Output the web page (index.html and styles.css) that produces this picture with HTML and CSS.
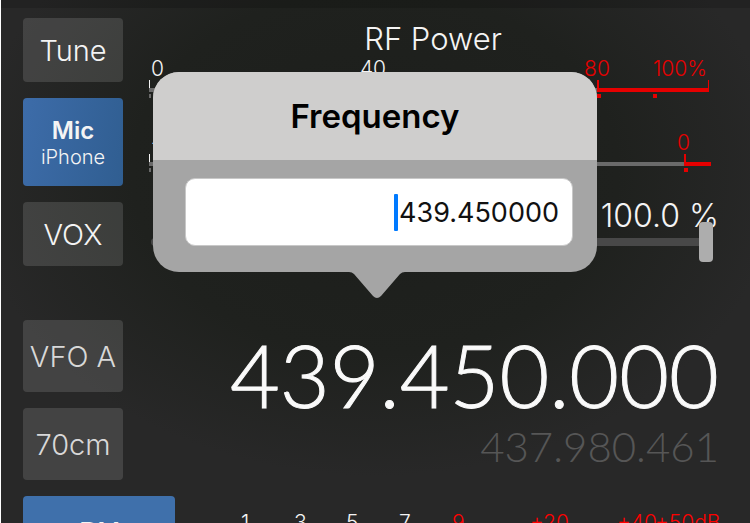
FILE: index.html
```html
<!DOCTYPE html>
<html lang="en">
<head>
<meta charset="utf-8">
<title>Transceiver</title>
<link rel="stylesheet" href="styles.css">
</head>
<body>
<header class="topbar"></header>
<main class="radio">
  <section class="panel transmit">
    <div class="keys">
      <button class="key" type="button">Tune</button>
      <button class="key key-mic active" type="button"><strong>Mic</strong><small>iPhone</small></button>
      <button class="key" type="button">VOX</button>
    </div>
    <div class="meters">
      <h2 class="meter-title">RF Power</h2>
      <div class="meter power">
        <div class="labels"><span class="l0">0</span><span class="l40">40</span><span class="l80">80</span><span class="l100">100%</span></div>
        <div class="ticks"><i></i><i class="hot"></i></div>
        <div class="dots"><i></i><i class="hot"></i><i class="hot mid"></i></div>
      </div>
      <div class="meter alc">
        <div class="labels"><span>-</span><span class="zero">0</span></div>
        <div class="ticks"><i></i><i class="hot"></i></div>
        <div class="dots"><i></i><i class="hot"></i></div>
      </div>
      <div class="level">
        <label class="level-value" for="power">100.0 %</label>
        <input class="slider" id="power" type="range" min="0" max="100" value="100">
      </div>
    </div>
  </section>
  <section class="panel receive">
    <div class="keys">
      <button class="key tall" type="button">VFO A</button>
      <button class="key tall" type="button">70cm</button>
    </div>
    <div class="readout">
      <output class="main-frequency">439.450.000</output>
      <output class="sub-frequency">437.980.461</output>
    </div>
  </section>
  <section class="signal">
    <button class="key tall active mode" type="button">DV</button>
    <div class="s-scale">
      <span>1</span><span>3</span><span>5</span><span>7</span><span class="hot">9</span><span class="hot">+20</span><span class="hot">+40</span><span class="hot">+50dB</span>
    </div>
  </section>
</main>
<form class="popover">
  <label class="popover-title" for="frequency">Frequency</label>
  <div class="popover-body">
    <div class="field"><span class="caret"></span><input class="entry" id="frequency" type="text" size="10" value="439.450000"></div>
  </div>
  <svg class="arrow" viewBox="0 0 56 28" aria-hidden="true"><path d="M0 0H56Q53 0 51 2L32 24Q28 28 24 24L5 2Q3 0 0 0Z"/></svg>
</form>
</body>
</html>
```

FILE: styles.css
```css
* { box-sizing: border-box; }

body {
  margin: 0;
  height: 100vh;
  overflow: hidden;
  position: relative;
  border-left: 1px solid #fff;
  background: radial-gradient(ellipse 54% 58% at 50% 33%, #1c1e1b 0%, #1f211e 60%, #282828 100%);
  color: #f4f4f4;
  font-family: Inter, "Liberation Sans", sans-serif;
}

.topbar { height: 8px; background: rgba(0, 0, 0, 0.15); }
.radio { height: calc(100vh - 8px); overflow: hidden; padding: 10px 31px 0 22px; }
.panel { display: grid; grid-template-columns: 100px minmax(0, 1fr); }
.keys { display: flex; flex-direction: column; gap: 16px; }

.key {
  display: block;
  height: 64px;
  padding: 2px 0 0;
  border: 0;
  border-radius: 4px;
  background: rgba(255, 255, 255, 0.13);
  color: inherit;
  font: 300 29px/36px Inter, sans-serif;
}
.key.active { background: linear-gradient(100deg, #3d6ca9, #305e91); }
.key-mic { height: 88px; }
.key-mic strong, .key-mic small { display: block; }
.key-mic strong { font-size: 24px; font-weight: 600; line-height: 28px; }
.key-mic small { font-size: 20px; line-height: 24px; }
.tall { height: 72px; }
.receive .key { color: #d8d8d8; }
.key.mode { background: #3f70ab; font-weight: 600; font-size: 28px; }

.meters { padding-left: 26px; }
.meter-title {
  margin: 0;
  height: 40px;
  padding: 1px 2px 0 0;
  font-size: 31px;
  font-weight: 300;
  line-height: 40px;
  text-align: center;
}

.labels {
  display: grid;
  font-size: 21px;
  font-weight: 300;
  line-height: 22px;
}
.labels span { grid-row: 1; }
.power { padding-right: 10px; }
.power .labels { grid-template-columns: repeat(5, 1fr); }
.l0 { grid-column: 1; padding-left: 2px; }
.l40 { grid-column: 2 / 4; text-align: center; }
.l80 { grid-column: 4 / 6; text-align: center; }
.l100 { grid-column: 5; padding-right: 2px; text-align: right; }
.l80, .l100, .zero { color: #e60000; }

.ticks, .dots { display: grid; grid-template-columns: 4fr 1fr; }
.ticks i {
  height: 12px;
  border-bottom: 4px solid #6a6a6a;
  background: linear-gradient(#f4f4f4, #f4f4f4) 0 0 / 1px 8px no-repeat;
}
.ticks .hot {
  border-bottom-color: #e60000;
  background: linear-gradient(#e60000, #e60000) 0 0 / 2px 8px no-repeat;
}
.power .ticks .hot { border-right: 1px solid #e60000; }
.dots { padding-top: 2px; }
.dots i { width: 4px; height: 4px; background: #6a6a6a; }
.dots .hot { background: #e60000; }
.dots i:first-child { width: 2px; }
.power .dots { grid-template-columns: 8fr 1fr 1fr; }

.alc { padding: 34px 8px 0 0; }
.alc .labels, .alc .ticks, .alc .dots { grid-template-columns: minmax(0, 1fr) 27px; }
.alc .labels { padding-left: 2px; }
.zero { justify-self: start; margin-left: -7px; }

.level { display: flex; flex-direction: column; padding-top: 26px; }
.level-value { align-self: flex-end; font-size: 32px; font-weight: 300; line-height: 36px; height: 24px; }
.slider {
  appearance: none;
  position: relative;
  margin: 0 6px 0 2px;
  height: 40px;
  background: transparent;
}
.slider::-webkit-slider-runnable-track { height: 8px; border-radius: 4px; background: #484848; }
.slider::-webkit-slider-thumb {
  appearance: none;
  width: 14px;
  height: 40px;
  margin-top: -16px;
  border-radius: 4px;
  background: #adadad;
}

.receive { margin-top: 54px; height: 176px; }
.readout { text-align: right; font-family: Lato, sans-serif; font-weight: 300; }
.readout output { display: block; white-space: nowrap; }
.main-frequency {
  padding-top: 3px;
  color: #fafafa;
  font-size: 86px;
  line-height: 104px;
  -webkit-text-stroke: 1px #fafafa;
}
.sub-frequency { font-size: 42px; line-height: 38px; color: #565656; }

.signal { display: grid; grid-template-columns: 152px minmax(0, 1fr); }
.s-scale {
  display: grid;
  grid-template-columns: 53fr 52fr 53fr 53fr 78fr 87fr 38fr 64fr;
  padding: 15px 0 0 66px;
  font-size: 21px;
  font-weight: 300;
  line-height: 24px;
}
.s-scale span { min-width: 0; white-space: nowrap; }
.s-scale .hot { color: #ff0000; }

.popover {
  position: absolute;
  left: 152px;
  right: 153px;
  top: 72px;
  border-radius: 26px;
  background: #a5a5a5;
  color: #000;
}
.popover-title {
  display: block;
  height: 88px;
  border-radius: 26px 26px 0 0;
  background: #cfcecd;
  font-size: 33px;
  font-weight: 600;
  line-height: 88px;
  text-align: center;
}
.popover-body { padding: 18px 24px 26px 32px; }
.field {
  display: flex;
  justify-content: flex-end;
  align-items: center;
  height: 68px;
  padding-right: 13px;
  border: 1px solid #c8c8c8;
  border-radius: 10px;
  background: #fff;
}
.caret { width: 4px; height: 37px; border-radius: 1px; background: #007aff; }
.entry {
  width: 161px;
  padding: 2px 0 0;
  border: 0;
  outline: 0;
  background: transparent;
  color: #111;
  font: 400 27px/36px Inter, sans-serif;
  text-align: right;
}
.arrow {
  position: absolute;
  top: 100%;
  left: 50%;
  width: 56px;
  margin-left: -26px;
  fill: #a5a5a5;
}
```
